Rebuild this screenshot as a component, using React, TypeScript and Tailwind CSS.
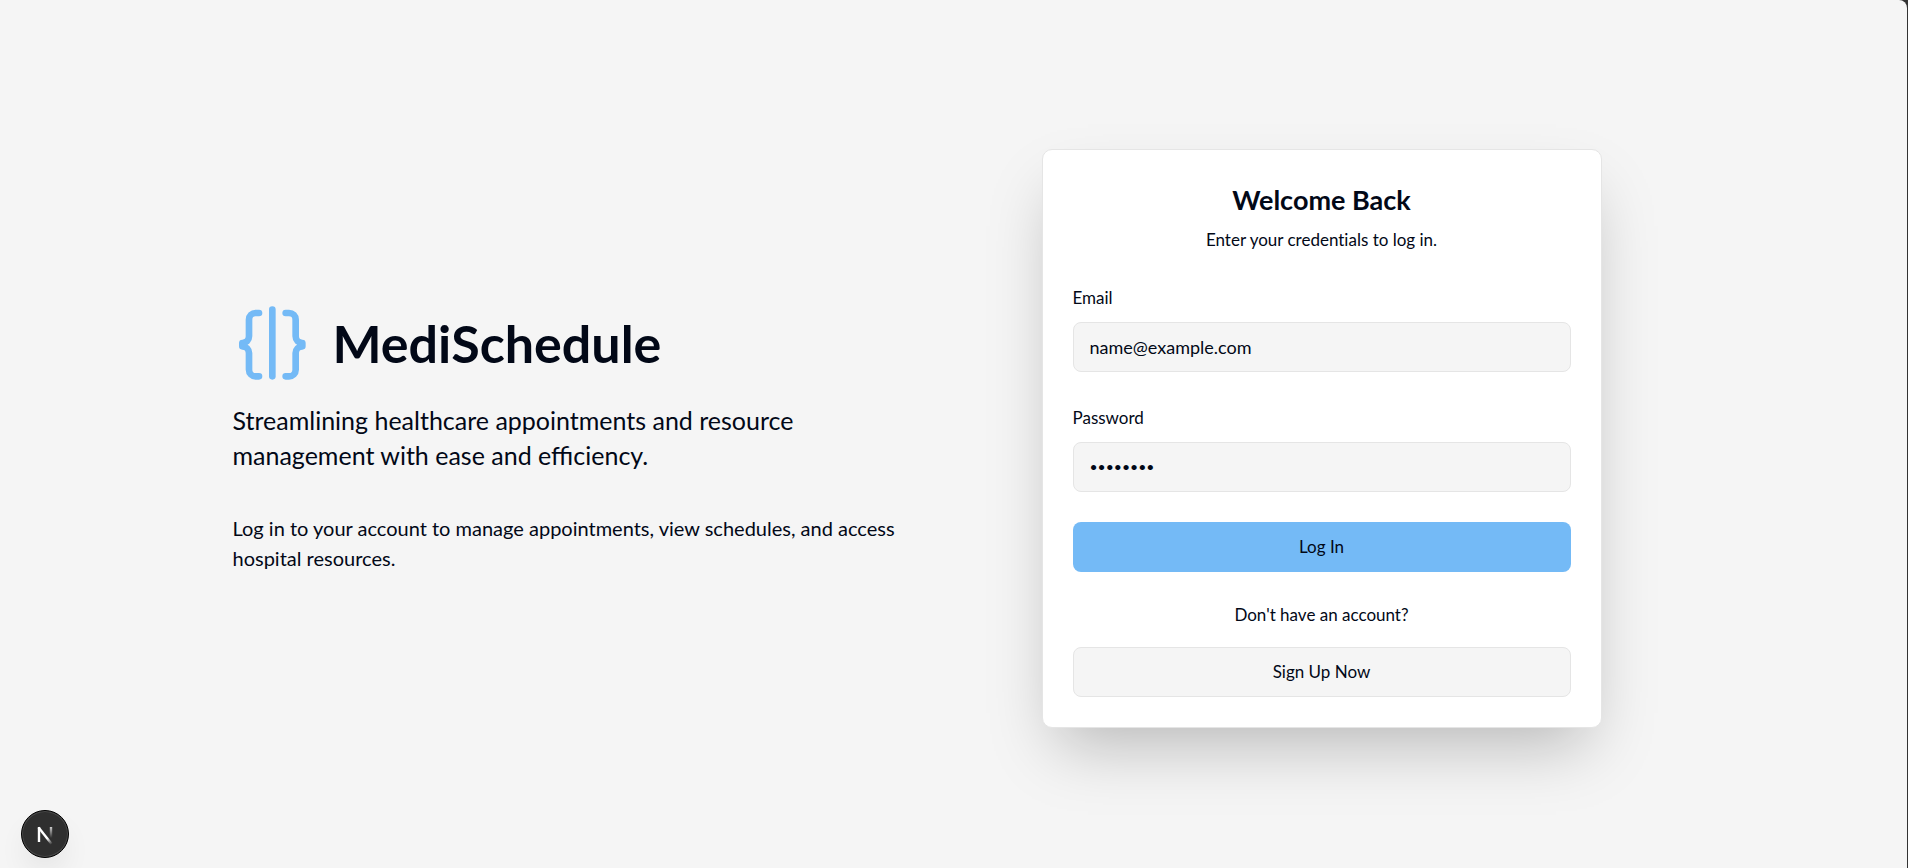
import type { InputHTMLAttributes } from "react";

function BrandIcon() {
  return (
    <svg
      className="size-20 shrink-0 text-[#74baf6]"
      viewBox="0 0 24 24"
      fill="none"
      stroke="currentColor"
      strokeWidth="2"
      strokeLinecap="round"
      strokeLinejoin="round"
      aria-hidden="true"
    >
      <path d="M7.8 3H6.8a2 2 0 0 0-2 2v5a2 2 0 0 1-2 2v1a2 2 0 0 1 2 2v5a2 2 0 0 0 2 2h1" />
      <path d="M11.8 2v20" />
      <path d="M15.8 3h1a2 2 0 0 1 2 2v5a2 2 0 0 0 2 2v1a2 2 0 0 0-2 2v5a2 2 0 0 1-2 2h-1" />
    </svg>
  );
}

type FieldProps = { id: string; label: string; textSize: string } & InputHTMLAttributes<HTMLInputElement>;

function Field({ id, label, textSize, ...rest }: FieldProps) {
  return (
    <div className="flex flex-col gap-3">
      <label htmlFor={id} className="leading-6">
        {label}
      </label>
      <input
        id={id}
        className={`h-[50px] w-full rounded-lg border border-[#e5e5e5] bg-[#f5f5f5] px-4 placeholder:text-[#020817] placeholder:opacity-100 ${textSize}`}
        {...rest}
      />
    </div>
  );
}

function DevBadge() {
  return (
    <button
      type="button"
      aria-label="Open developer tools"
      className="fixed bottom-[10px] left-[21px] flex size-12 items-center justify-center rounded-full border border-black bg-[#2f2f2f] shadow-[inset_0_0_0_1px_#4a4a4a,0_16px_32px_-8px_rgba(0,0,0,0.12)]"
    >
      <svg className="size-10" viewBox="0 0 40 40" fill="none" strokeWidth="2.4" aria-hidden="true">
        <defs>
          <linearGradient id="diag" x1="20" y1="20" x2="27" y2="30" gradientUnits="userSpaceOnUse">
            <stop offset="0.4" stopColor="#fff" />
            <stop offset="1" stopColor="#fff" stopOpacity="0" />
          </linearGradient>
          <linearGradient id="stem" x1="26" y1="13" x2="26" y2="24" gradientUnits="userSpaceOnUse">
            <stop stopColor="#fff" stopOpacity="0.75" />
            <stop offset="1" stopColor="#fff" stopOpacity="0" />
          </linearGradient>
        </defs>
        <path d="M14 28V13" stroke="#fff" />
        <path d="M13.6 13.4L26.6 30" stroke="url(#diag)" />
        <path d="M26 13V24" stroke="url(#stem)" />
      </svg>
    </button>
  );
}

export default function App() {
  return (
    <div className="min-h-screen bg-[#333333] pr-px font-['Lato','Noto_Sans',sans-serif] text-[#020817]">
      <main className="flex min-h-screen items-center justify-center rounded-tr-lg bg-[#f5f5f5] px-8 pt-2">
        <div className="grid w-full max-w-[1442px] items-center gap-[30px] lg:grid-cols-2">
          <section className="flex flex-col">
            <div className="flex items-center gap-5">
              <BrandIcon />
              <h1 className="text-[52px] leading-[60px] font-bold">MediSchedule</h1>
            </div>
            <p className="mt-5 max-w-[640px] text-[25px] leading-[35px]">
              Streamlining healthcare appointments and resource management with ease and efficiency.
            </p>
            <p className="mt-10 max-w-[690px] text-[20px] leading-[30px]">
              Log in to your account to manage appointments, view schedules, and access hospital resources.
            </p>
          </section>

          <section className="w-full max-w-[560px] justify-self-center rounded-[10px] border border-[#e5e5e5] bg-white p-[30px] text-[17px] [font-variant-ligatures:none] shadow-[0_31px_62px_-15px_rgba(0,0,0,0.25)]">
            <header className="flex flex-col gap-2 text-center">
              <h2 className="text-[27px] leading-10 font-bold">Welcome Back</h2>
              <p className="leading-6">Enter your credentials to log in.</p>
            </header>
            <form className="mt-[34px]" onSubmit={(e) => e.preventDefault()}>
              <div className="flex flex-col gap-[34px]">
                <Field id="email" label="Email" textSize="text-[18px]" type="email" placeholder="name@example.com" />
                <Field id="password" label="Password" textSize="text-[14px]" type="password" placeholder="••••••••" />
              </div>
              <button type="submit" className="mt-[30px] h-[50px] w-full rounded-lg bg-[#74baf6]">
                Log In
              </button>
            </form>
            <p className="mt-[31px] text-center leading-6">Don't have an account?</p>
            <button type="button" className="mt-5 h-[50px] w-full rounded-lg border border-[#e5e5e5] bg-[#f5f5f5]">
              Sign Up Now
            </button>
          </section>
        </div>
      </main>
      <DevBadge />
    </div>
  );
}
